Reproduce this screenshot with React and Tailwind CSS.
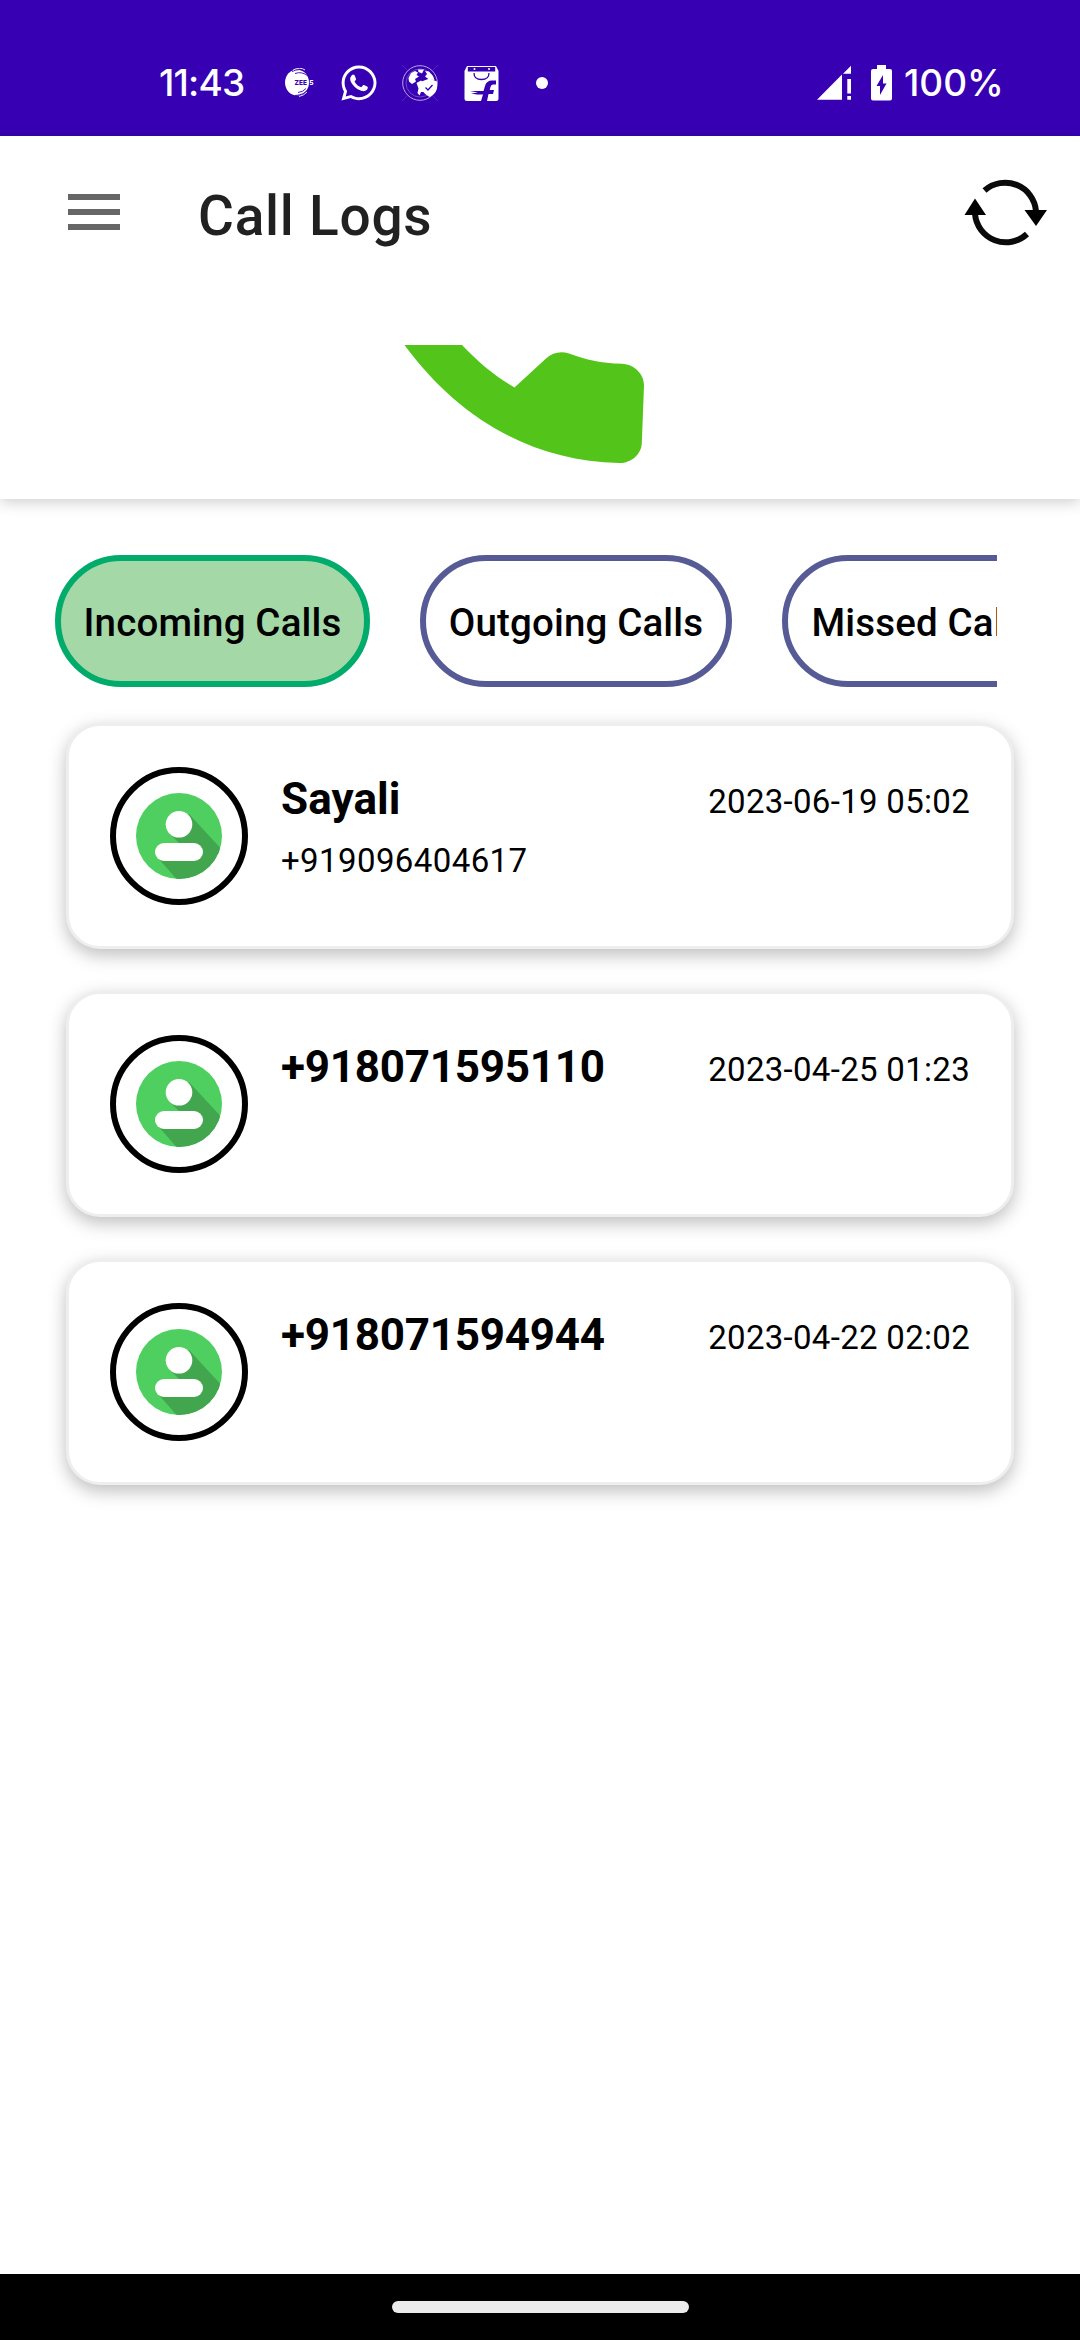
import React from "react";
import { FaWhatsapp } from "react-icons/fa";

const calls = [
  { name: "Sayali", number: "+919096404617", date: "2023-06-19 05:02" },
  { name: "+918071595110", number: "", date: "2023-04-25 01:23" },
  { name: "+918071594944", number: "", date: "2023-04-22 02:02" },
];

function Zee5Icon() {
  return (
    <svg className="h-[30px] w-[30px]" viewBox="283 69 30 30">
      <ellipse cx="296" cy="83.500" rx="12" ry="13" fill="#fff" />
      <path d="M291 72.500 Q299 68.500 305 73 M294 74.500 Q301 72 307 77 M294 96.500 Q303 96 307 90.500 M297 93.500 Q302 93 305 89.500" fill="none" stroke="#3700b3" strokeWidth="0.9" />
      <path d="M292 71 Q299 67.500 304 71 M298 97.500 Q303 96.500 306 93" fill="none" stroke="#fff" strokeWidth="0.9" />
      <text x="293.600" y="85.800" fontFamily="Inter" fontSize="6.500" fontWeight="800" fill="#3700b3">ZEE</text>
      <text x="308.300" y="85.800" fontFamily="Inter" fontSize="6.500" fontWeight="800" fill="#fff">5</text>
    </svg>
  );
}

function GlobeIcon() {
  return (
    <svg className="h-[38px] w-[38px]" viewBox="401 64 38 38">
      <path d="M402 65 L438 101 M438 65 L402 101" stroke="#8a6ad0" strokeWidth="0.5" opacity="0.7" />
      <circle cx="420" cy="83" r="17.300" fill="#3700b3" stroke="#b9a6e4" strokeWidth="1" />
      <circle cx="420" cy="83" r="14" fill="none" stroke="#8a6ad0" strokeWidth="0.7" />
      <path d="M408.500 78 L411 73 L415 71 L418 72.500 L416.500 75 L419 76.500 L415 79 L416 81.500 L412 84 L409 81.500Z" fill="#fff" />
      <path d="M418 69.500 L424 69.500 L422 73.500 L418.500 72Z M425 71 L429 71.500 L433 76 L434.500 80 L429 79.500 L425 76.500 L427 74Z" fill="#fff" />
      <path d="M416.500 83 L421 80.500 L425 84 L425 92 L421 92 L419.500 95.500 L417.500 93 L418.500 88.500Z" fill="#fff" />
      <path d="M421.500 81.500 L429.500 78.500 L437 81.500 V88 Q436 94 429.500 97 Q422.500 93 421.500 88Z" fill="#fff" />
      <path d="M425.500 87.500 L428 90 L432.500 85" fill="none" stroke="#3700b3" strokeWidth="1.300" />
    </svg>
  );
}

function ShopIcon() {
  return (
    <svg className="h-[36px] w-[36px]" viewBox="464 65 36 36">
      <path d="M467 66 H496 L498.500 71 V98.500 Q498.500 101 496 101 H467 Q464.500 101 464.500 98.500 V71Z" fill="#fff" />
      <path d="M467.800 67 H495.200 V71.500 H467.800Z" fill="#3700b3" />
      <circle cx="474.500" cy="69" r="1" fill="#fff" />
      <circle cx="489" cy="69" r="1" fill="#fff" />
      <path d="M474 73 Q474 79.500 481.500 79.500 Q489 79.500 489 73" fill="none" stroke="#3700b3" strokeWidth="1.300" />
      <path d="M481 101 L483 94.500 H477 L471 93.500 L478 92.500 L470 91 H483.500 L485 86 Q486.500 80.500 492 80.500 H496 V84.500 H493 Q491 84.500 490.500 87 L489.700 90 H494 L493 94 H488.500 L487 101Z" fill="#3700b3" />
    </svg>
  );
}

function StatusBar() {
  return (
    <div className="flex h-[136px] items-center bg-[#3700b3] pt-[30px] pr-[77px] pl-[159px] font-['Inter',sans-serif] text-[37px] font-medium text-white">
      <span className="w-[125px] tracking-[-0.8px]">11:43</span>
      <Zee5Icon />
      <FaWhatsapp className="ml-[25px] h-[40px] w-[40px]" />
      <span className="ml-[22px]"><GlobeIcon /></span>
      <span className="ml-[25px]"><ShopIcon /></span>
      <span className="ml-[36px] h-3 w-3 rounded-full bg-white" />
      <svg className="ml-auto h-[36px] w-[34px]" viewBox="816 65 34 36" fill="#fff">
        <path d="M816 99.700 L841 74.500 V99.700Z M842 73.800 L850 65.800 V73.800Z M846.300 79 h3.700 v14.500 h-3.700Z M846.300 96 h3.700 v3.700 h-3.700Z" />
      </svg>
      <svg className="ml-[20px] h-[36px] w-[21px]" viewBox="870 65 21 36">
        <path d="M876 65 h9 v4 h4 q2 0 2 2 v27.500 q0 2 -2 2 h-17 q-2 0 -2 -2 V71 q0 -2 2 -2 h4Z" fill="#fff" />
        <path d="M882 75 L875.500 86 H879 V95 L885.500 83.500 H882Z" fill="#3700b3" />
      </svg>
      <span className="ml-[12px] w-[99px] whitespace-nowrap">100%</span>
    </div>
  );
}

function Header() {
  return (
    <header className="h-[363px] bg-white shadow-[0_3px_14px_rgba(0,0,0,0.2)]">
      <div className="flex h-[151px] items-center pr-[33px] pl-[68px]">
        <div className="flex w-[52px] flex-col gap-[9px]">
          <span className="h-[6px] bg-[#666]" />
          <span className="h-[6px] bg-[#666]" />
          <span className="h-[6px] bg-[#666]" />
        </div>
        <h1 className="mt-[8px] ml-[78px] text-[55px] leading-[64px] font-medium tracking-[0.75px] text-[#212121]">Call Logs</h1>
        <svg className="ml-auto h-[68px] w-[83px]" viewBox="964 178 83 68">
          <path d="M984.500 190.500 A31 31 0 0 1 1036 211 M975 214 A31 31 0 0 0 1027 234" fill="none" stroke="#0a0a0a" strokeWidth="6" />
          <path d="M1024.500 210 H1047 L1036 226Z M964.500 215 H986 L975 198.500Z" fill="#000" />
        </svg>
      </div>
      <div className="pt-[58px] pl-[403px]">
        <svg className="h-[120px] w-[242px]" viewBox="403 345 242 120">
          <path d="M404.500 345 H462 C478 362 496 377 514.500 387.500 L546 358.500 Q556 349.500 569 353.500 C587 360 600 363 622 363.800 C635 364.500 644.500 375 644 386 L641.800 443 C641.500 455 630 463.500 619 463 C532 461 459 419 404.500 345Z" fill="#52c41a" />
        </svg>
      </div>
    </header>
  );
}

const chipStyles = {
  incoming: "w-[315px] border-[#00ab6b] bg-[#a5d8a7]",
  outgoing: "w-[312px] border-[#565b95] bg-white",
  missed: "w-[281px] border-[#565b95] bg-white",
};

function Chip({ label, kind }) {
  return (
    <button
      className={
        "h-[132px] shrink-0 rounded-full border-[6px] pt-[3px] text-[38.5px] font-medium tracking-[0.15px] text-black " +
        chipStyles[kind]
      }
    >
      {label}
    </button>
  );
}

function Avatar() {
  return (
    <div className="flex h-[138px] w-[138px] shrink-0 items-center justify-center rounded-full border-[6px] border-black">
      <svg className="h-[86px] w-[86px]" viewBox="0 0 86 86">
        <defs>
          <clipPath id="avatar-disc"><circle cx="43" cy="43" r="43" /></clipPath>
        </defs>
        <g clipPath="url(#avatar-disc)">
          <rect width="86" height="86" fill="#4fcf5f" />
          <path d="M53 21 L90 61 V90 H44 L22 65 L43 50 L34 41Z" fill="#41a64d" />
        </g>
        <circle cx="43" cy="31.300" r="13.300" fill="#fff" />
        <rect x="19" y="50" width="48" height="18" rx="9" fill="#fff" />
      </svg>
    </div>
  );
}

function CallCard({ call }) {
  return (
    <article className="flex h-[226px] rounded-[34px] border-[3px] border-[#eee] bg-white pt-[41px] pr-[41px] pl-[41px] shadow-[0_6px_18px_rgba(0,0,0,0.26)]">
      <Avatar />
      <div className="ml-[33px] flex-1">
        <div className="flex items-start justify-between">
          <h2 className={"mt-[6px] text-[44px] leading-[52px] font-bold " + (call.number ? "tracking-[0.1px]" : "tracking-[-0.25px]")}>
            {call.name}
          </h2>
          <time className="mt-[15px] text-[33px] leading-[40px] tracking-[0.3px]">{call.date}</time>
        </div>
        <p className="mt-[16px] text-[33px] leading-[40px] tracking-[0.4px]">{call.number}</p>
      </div>
    </article>
  );
}

export default function App() {
  return (
    <div className="flex h-[2340px] w-[1080px] flex-col overflow-hidden bg-white font-['Roboto',sans-serif] text-black">
      <StatusBar />
      <Header />
      <nav className="mt-[56px] mr-[83px] ml-[55px] flex gap-[50px] overflow-hidden">
        <Chip label="Incoming Calls" kind="incoming" />
        <Chip label="Outgoing Calls" kind="outgoing" />
        <Chip label="Missed Calls" kind="missed" />
      </nav>
      <main className="mx-[66px] mt-[36px] flex flex-1 flex-col gap-[42px]">
        {calls.map((call) => (
          <CallCard key={call.date} call={call} />
        ))}
      </main>
      <footer className="flex h-[66px] items-center justify-center bg-black">
        <span className="h-3 w-[297px] rounded-full bg-[#ebebeb]" />
      </footer>
    </div>
  );
}
